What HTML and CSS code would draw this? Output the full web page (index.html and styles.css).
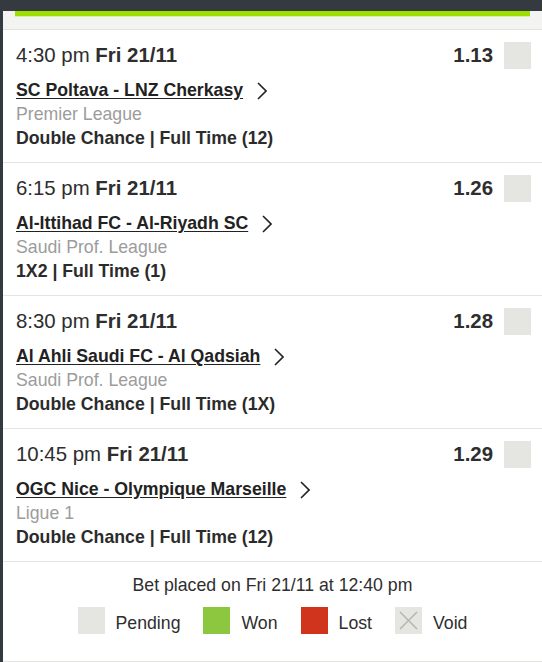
FILE: index.html
```html
<!DOCTYPE html>
<html>
<head>
<meta charset="utf-8">
<link rel="stylesheet" href="styles.css">
</head>
<body>
<div class="topbar"></div>
<div class="panel">
  <div class="header"><div class="progress"></div></div>

  <div class="row">
    <div class="info">
      <div class="time">4:30 pm <b>Fri 21/11</b></div>
      <div class="match"><a href="#">SC Poltava - LNZ Cherkasy</a><svg class="chev" width="10" height="18" viewBox="0 0 10 18"><path d="M1 1 L9 9 L1 17" /></svg></div>
      <div class="league">Premier League</div>
      <div class="market">Double Chance | Full Time (12)</div>
    </div>
    <div class="odds">1.13</div>
    <div class="box pending"></div>
  </div>

  <div class="row">
    <div class="info">
      <div class="time">6:15 pm <b>Fri 21/11</b></div>
      <div class="match"><a href="#">Al-Ittihad FC - Al-Riyadh SC</a><svg class="chev" width="10" height="18" viewBox="0 0 10 18"><path d="M1 1 L9 9 L1 17" /></svg></div>
      <div class="league">Saudi Prof. League</div>
      <div class="market">1X2 | Full Time (1)</div>
    </div>
    <div class="odds">1.26</div>
    <div class="box pending"></div>
  </div>

  <div class="row">
    <div class="info">
      <div class="time">8:30 pm <b>Fri 21/11</b></div>
      <div class="match"><a href="#">Al Ahli Saudi FC - Al Qadsiah</a><svg class="chev" width="10" height="18" viewBox="0 0 10 18"><path d="M1 1 L9 9 L1 17" /></svg></div>
      <div class="league">Saudi Prof. League</div>
      <div class="market">Double Chance | Full Time (1X)</div>
    </div>
    <div class="odds">1.28</div>
    <div class="box pending"></div>
  </div>

  <div class="row">
    <div class="info">
      <div class="time">10:45 pm <b>Fri 21/11</b></div>
      <div class="match"><a href="#">OGC Nice - Olympique Marseille</a><svg class="chev" width="10" height="18" viewBox="0 0 10 18"><path d="M1 1 L9 9 L1 17" /></svg></div>
      <div class="league">Ligue 1</div>
      <div class="market">Double Chance | Full Time (12)</div>
    </div>
    <div class="odds">1.29</div>
    <div class="box pending"></div>
  </div>

  <div class="legend">
    <div class="placed">Bet placed on Fri 21/11 at 12:40 pm</div>
    <div class="keys">
      <div class="key"><span class="box pending"></span><span class="label">Pending</span></div>
      <div class="key"><span class="box won"></span><span class="label">Won</span></div>
      <div class="key"><span class="box lost"></span><span class="label">Lost</span></div>
      <div class="key"><span class="box void"><svg width="27" height="27" viewBox="0 0 27 27"><path d="M5 5 L22 22 M22 5 L5 22" /></svg></span><span class="label">Void</span></div>
    </div>
  </div>
</div>
</body>
</html>
```

FILE: styles.css
```css
html, body {
  margin: 0;
  padding: 0;
  background: #ffffff;
}
body {
  font-family: "Liberation Sans", Arial, sans-serif;
  color: #2e2e2e;
  width: 542px;
  height: 662px;
  overflow: hidden;
}
.topbar {
  height: 11px;
  background: #343a3f;
}
.panel {
  border-left: 3px solid #343a3f;
  height: 651px;
  background: #ffffff;
}
.header {
  height: 18px;
  background: #f3f3f1;
  border-bottom: 1px solid #e2e2df;
  padding: 0 12px;
}
.progress {
  height: 5px;
  background: #9be000;
  box-shadow: 0 1px 0 #d8efb0;
}
.row {
  display: flex;
  align-items: flex-start;
  padding: 13px 11px 12px 13px;
  border-bottom: 1px solid #e4e4e2;
  height: 107px;
}
.info {
  flex: 1;
  min-width: 0;
}
.time {
  font-size: 20.4px;
  line-height: 24px;
  color: #2e2e2e;
  margin-bottom: 11px;
}
.time b {
  font-weight: bold;
}
.match, .league, .market {
  font-size: 17.7px;
  line-height: 24px;
  white-space: nowrap;
}
.match {
  display: flex;
  align-items: center;
}
.match a {
  color: #222222;
  font-weight: bold;
  text-decoration: underline;
  text-underline-offset: 2px;
}
.chev {
  margin-left: 14px;
  margin-top: 1px;
}
.chev path {
  fill: none;
  stroke: #222222;
  stroke-width: 1.6;
}
.league {
  color: #9c9c9c;
}
.market {
  font-weight: bold;
  color: #2b2b2b;
}
.odds {
  font-size: 20.4px;
  line-height: 24px;
  font-weight: bold;
  color: #2e2e2e;
  margin-right: 11px;
}
.box {
  display: block;
  width: 27px;
  height: 27px;
  flex: none;
}
.row .box {
  margin-top: -1px;
}
.pending {
  background: #e5e5e1;
}
.won {
  background: #8dc63f;
}
.lost {
  background: #d0341c;
}
.void {
  background: #e5e5e1;
}
.void svg {
  display: block;
}
.void path {
  stroke: #b4b4b2;
  stroke-width: 1.5;
  fill: none;
}
.legend {
  padding: 11px 0 26px;
  border-bottom: 1px solid #e4e4e2;
  text-align: center;
}
.placed {
  font-size: 17.7px;
  line-height: 24px;
  color: #2e2e2e;
}
.keys {
  display: flex;
  justify-content: center;
  gap: 23px;
  margin-top: 10px;
}
.key {
  display: flex;
  align-items: flex-start;
  gap: 11px;
}
.label {
  font-size: 17.7px;
  line-height: 24px;
  padding-top: 4px;
  color: #2e2e2e;
}
```
